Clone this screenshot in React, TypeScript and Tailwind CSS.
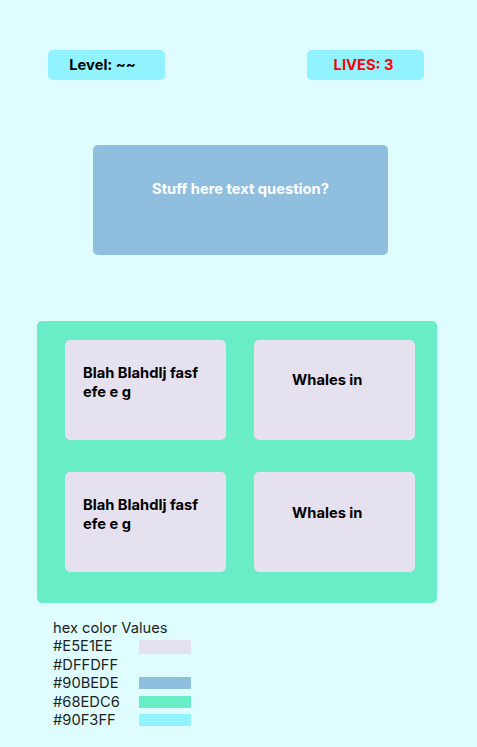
const answers = [
  { text: "Blah Blahdlj fasf efe e g", pad: "pl-[18px] pr-[14px] pt-[24px]" },
  { text: "Whales in", pad: "pl-[38px] pt-[31px]" },
  { text: "Blah Blahdlj fasf efe e g", pad: "pl-[18px] pr-[14px] pt-[24px]" },
  { text: "Whales in", pad: "pl-[38px] pt-[32px]" },
];

const swatches = [
  { hex: "#E5E1EE", cls: "bg-[#e5e1ee] h-[14px]" },
  { hex: "#DFFDFF", cls: "" },
  { hex: "#90BEDE", cls: "bg-[#90bede] h-[12px]" },
  { hex: "#68EDC6", cls: "bg-[#68edc6] h-[12px]" },
  { hex: "#90F3FF", cls: "bg-[#90f3ff] h-[12px]" },
];

export default function App() {
  return (
    <div className="w-[477px] h-[747px] overflow-hidden bg-[#dffdff] font-['Inter',sans-serif]">
      <div className="flex justify-between pl-[48px] pr-[53px] pt-[50px]">
        <div className="flex h-[30px] w-[117px] items-center justify-center rounded-[5px] bg-[#90f3ff] pr-[8px] text-[14.7px] font-bold text-black">
          Level: ~~
        </div>
        <div className="flex h-[30px] w-[117px] items-center justify-center rounded-[5px] bg-[#90f3ff] pr-[4px] text-[14.7px] font-bold text-[#ff0000]">
          LIVES: 3
        </div>
      </div>

      <div className="ml-[93px] mt-[65px] h-[110px] w-[295px] rounded-[5px] bg-[#90bede] pt-[34px] text-center text-[14.7px] font-bold leading-[20px] text-white">
        Stuff here text question?
      </div>

      <div className="ml-[37px] mt-[66px] grid h-[282px] w-[400px] grid-cols-[161px_161px] auto-rows-[100px] content-start gap-x-[28px] gap-y-[32px] rounded-[5px] bg-[#68edc6] pl-[28px] pt-[19px]">
        {answers.map((a, i) => (
          <div
            key={i}
            className={`rounded-[5px] bg-[#e5e1ee] text-[14.7px] font-bold leading-[19px] text-black ${a.pad}`}
          >
            {a.text}
          </div>
        ))}
      </div>

      <div className="ml-[53px] mt-[16px] text-[14.7px] leading-[18.4px] text-[#1e1e1e]">
        <div>hex color Values</div>
        {swatches.map((s) => (
          <div key={s.hex} className="flex h-[18.4px] items-center">
            <span className="w-[86px]">{s.hex}</span>
            {s.cls && <span className={`block w-[52px] ${s.cls}`} />}
          </div>
        ))}
      </div>
    </div>
  );
}
